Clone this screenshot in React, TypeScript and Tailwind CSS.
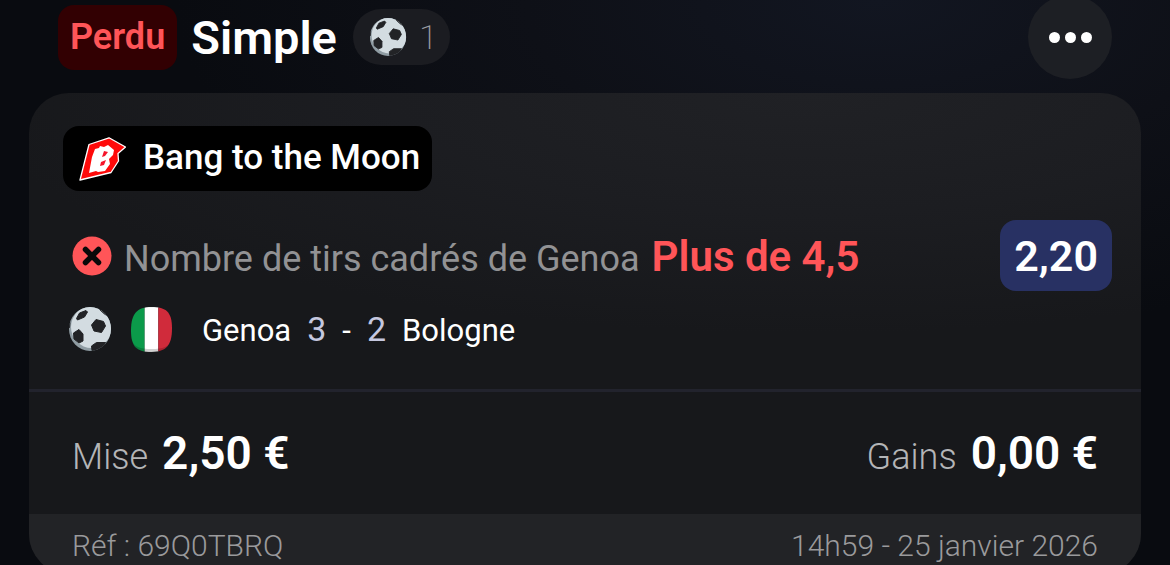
import React from "react";

function SoccerBall({ className }: { className: string }) {
  return (
    <svg viewBox="0 0 42 44" className={className} aria-hidden="true">
      <defs>
        <clipPath id="ball-clip">
          <ellipse cx="21" cy="22" rx="21" ry="22" />
        </clipPath>
      </defs>
      <g clipPath="url(#ball-clip)">
        <rect width="42" height="44" fill="#8f9ca3" />
        <ellipse cx="22.500" cy="20" rx="20.500" ry="21" fill="#d3dce1" />
        <g fill="#222326" stroke="#222326" strokeWidth="1" strokeLinejoin="round">
          <path d="M27 12.500l7.500 2 2 4.500-4 6.500-7.500-1.500-2.500-6z" />
          <path d="M7.500 11.500l3-5.500 6.500-2.500 1.500 1.500-3 5-7 3z" />
          <path d="M4.500 26l5.500-3.500 4 4.500v7l-4 2-5-4z" />
          <path d="M22.500 39l5-3.500h9l-2.500 4.500-5.500 3.500h-5.500z" />
          <path d="M30.500 2.500l5 4.500 3 2-1-4-5-4z" />
          <path d="M0 15.500h1l-.500 5-1 1z" />
        </g>
      </g>
    </svg>
  );
}

function ItalianFlag() {
  return (
    <svg viewBox="0 0 42 46" className="h-[45px] w-[41px]" role="img" aria-label="Italie">
      <defs>
        <clipPath id="flag-clip">
          <path d="M21 0C36 0 42 5 42 22S36 46 21 46 0 41 0 24 6 0 21 0z" />
        </clipPath>
      </defs>
      <g clipPath="url(#flag-clip)">
        <rect width="14" height="46" fill="#0b9a4a" />
        <rect x="14" width="14" height="46" fill="#ffffff" />
        <rect x="28" width="14" height="46" fill="#d02b3b" />
        <path d="M0 33c3 8 9 10 21 10s18-2 21-10v13H0z" fill="#000000" opacity="0.18" />
      </g>
    </svg>
  );
}

function BrandLogo() {
  return (
    <svg viewBox="0 0 48 44" className="h-[44px] w-[48px]" aria-hidden="true">
      <path d="M10 7.500L30 .8 46.500 10 39 16.500 39.500 24 32 35.500 1 43z" fill="#ff0a0a" stroke="#fff" strokeWidth="1.300" strokeLinejoin="round" />
      <path d="M16 12l4-1 1-2 4 1 4-2 6 5-1 5-4 4 1 5-5 7-7 1-2-1-7 2 3-16z" fill="#fff" />
      <path d="M25 14l4 1-3 4-3 1zM22 25l5-2-2 5-4 1z" fill="#f5142a" />
    </svg>
  );
}

export default function App() {
  return (
    <main className="h-screen overflow-hidden bg-[#090b10] bg-[radial-gradient(ellipse_60%_60%_at_75%_0%,#121621_0%,#0e1017_50%,#090b10_100%)] px-[29px] font-['Roboto','Liberation_Sans',sans-serif] text-white">
      <header className="flex h-[74px] items-center px-[29px]">
        <span className="flex h-[65px] items-center rounded-[16px] bg-[#320002] px-3 text-[36px] font-semibold text-[#ff5558]">
          Perdu
        </span>
        <h1 className="ml-[14px] text-[47px] leading-none font-semibold">Simple</h1>
        <span className="ml-4 flex h-14 items-center gap-3 rounded-full bg-[#1b1c21] pr-3 pl-4 text-[34px] font-extralight text-[#9a9ba0]">
          <SoccerBall className="h-[38px] w-[38px]" />
          1
        </span>
        <button
          type="button"
          aria-label="Plus d’options"
          className="ml-auto flex size-[84px] shrink-0 items-center justify-center gap-[5px] rounded-full bg-[#1d1f24]"
        >
          <span className="size-[11px] rounded-full bg-white" />
          <span className="size-[11px] rounded-full bg-white" />
          <span className="size-[11px] rounded-full bg-white" />
        </button>
      </header>

      <article className="mt-[19px] overflow-hidden rounded-[40px] bg-[#17181b] bg-[radial-gradient(ellipse_75%_50%_at_70%_0%,#202125_0%,#1c1d21_50%,#17181b_100%)]">
        <section className="px-[34px] pt-[33px] pb-[36px]">
          <div className="flex h-[65px] w-fit items-center gap-4 rounded-[16px] bg-black pr-3 pl-4 text-[35px] font-medium">
            <BrandLogo />
            Bang to the Moon
          </div>

          <div className="-mr-[5px] mt-[29px] flex h-[71px] items-center pl-[9px]">
            <svg viewBox="0 0 40 40" className="size-[40px] shrink-0" role="img" aria-label="Perdu">
              <circle cx="20" cy="20" r="19.500" fill="#ff5558" />
              <path d="M13.500 13.500l13 13m0-13l-13 13" stroke="#090909" strokeWidth="5.500" strokeLinecap="round" />
            </svg>
            <p className="ml-3 flex items-baseline gap-3 pt-[2px]">
              <span className="text-[36px] text-[#929294]">Nombre de tirs cadrés de Genoa</span>
              <strong className="text-[42px] font-semibold text-[#ff5558]">Plus de 4,5</strong>
            </p>
            <span className="ml-auto flex h-[71px] items-center rounded-[16px] bg-[#283163] px-[14px] pt-[2px] text-[43px] font-semibold">
              2,20
            </span>
          </div>

          <div className="mt-[14px] flex h-[48px] items-center pl-[6px] text-[31px]">
            <SoccerBall className="h-[44px] w-[42px]" />
            <span className="ml-5 flex">
              <ItalianFlag />
            </span>
            <p className="ml-[30px] flex items-baseline gap-4">
              <span>Genoa</span>
              <span className="text-[34px] text-[#c5c7df]">3</span>
              <span>-</span>
              <span className="text-[34px] text-[#c5c7df]">2</span>
              <span>Bologne</span>
            </p>
          </div>
        </section>

        <dl className="flex h-[125px] items-center justify-between border-t-3 border-[#22232d] px-[43px]">
          <div className="flex items-baseline gap-[14px]">
            <dt className="text-[36px] font-light text-[#b4b5b7]">Mise</dt>
            <dd className="text-[46px] font-semibold">2,50 €</dd>
          </div>
          <div className="flex items-baseline gap-[14px]">
            <dt className="text-[36px] font-light text-[#b4b5b7]">Gains</dt>
            <dd className="text-[46px] font-semibold">0,00 €</dd>
          </div>
        </dl>

        <footer className="flex h-[60px] items-center justify-between bg-[#222326] px-[43px] pt-[2px] text-[30px] font-light text-[#9a9a9c]">
          <span>Réf : 69Q0TBRQ</span>
          <time dateTime="2026-01-25T14:59">14h59 - 25 janvier 2026</time>
        </footer>
      </article>
    </main>
  );
}
